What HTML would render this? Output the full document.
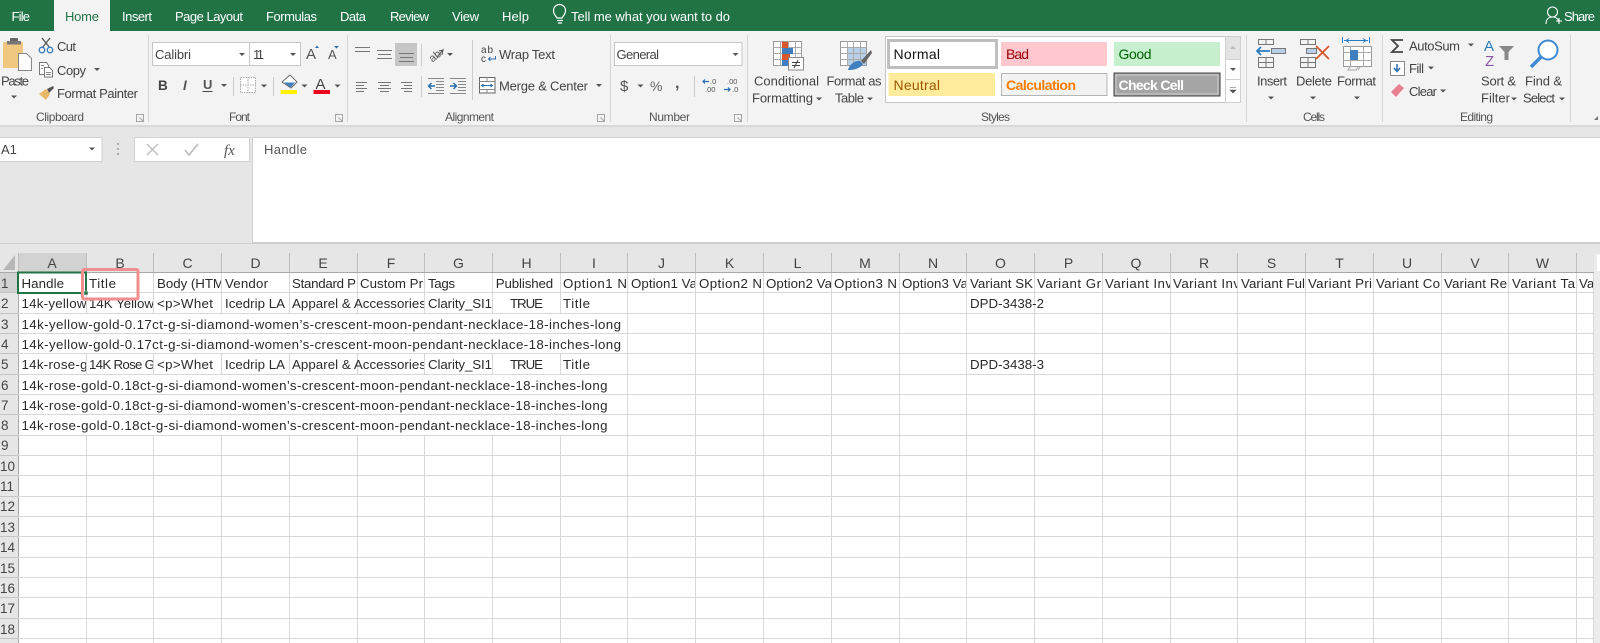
<!DOCTYPE html>
<html><head><meta charset="utf-8"><title>Excel</title>
<style>
html,body{margin:0;padding:0;width:1600px;height:643px;overflow:hidden;background:#fff}
svg.root{display:block;filter:blur(.3px)}
text{font-family:"Liberation Sans",sans-serif;font-size:13px;fill:#444}
.t{fill:#fff;font-size:13px}
.g{font-size:12px;fill:#555}
.c{font-size:13.3px;fill:#2a2a2a}
.h{font-size:14px;fill:#444;text-anchor:middle}
.r{font-size:13.5px;fill:#444}
.car{fill:#555}
</style></head><body>
<svg class="root" width="1600" height="643" viewBox="0 0 1600 643" xmlns="http://www.w3.org/2000/svg">
<defs><path id="cr" d="M-3 -1.500H3L0 1.500Z" class="car"/>
<path id="dl" d="M0 0H7V7H0ZM3 3L7 7M7 4V7H4" fill="none" stroke="#a5a5a5" stroke-width="1"/></defs>
<!-- backgrounds -->
<rect width="1600" height="643" fill="#fff"/>
<rect y="31" width="1600" height="94" fill="#f3f3f3"/>
<rect y="125" width="1600" height="2" fill="#d8d8d8"/>
<rect y="127" width="1600" height="146" fill="#e6e6e6"/>
<!-- title bar -->
<rect width="1600" height="31" fill="#217346"/>
<rect x="54" width="56" height="32" fill="#f3f3f3"/>
<text class="t" x="11.500" y="21" textLength="18.500">File</text>
<text x="65" y="21" textLength="34" style="fill:#217346">Home</text>
<text class="t" x="122" y="21" textLength="30">Insert</text>
<text class="t" x="175" y="21" textLength="68">Page Layout</text>
<text class="t" x="266" y="21" textLength="51">Formulas</text>
<text class="t" x="340" y="21" textLength="26">Data</text>
<text class="t" x="390" y="21" textLength="39">Review</text>
<text class="t" x="452" y="21" textLength="27">View</text>
<text class="t" x="502" y="21" textLength="27">Help</text>
<path d="M557 18c-1-2-3.500-3.500-3.500-7.500a6 6 0 0 1 12 0c0 4-2.500 5.500-3.500 7.500ZM557 20.500h6M558 23h4" fill="none" stroke="#fff" stroke-width="1.200"/>
<text class="t" x="571" y="21" textLength="159">Tell me what you want to do</text>
<path d="M1546 24c0-5 3-7 6.500-7s6.500 2 6.500 7M1552.500 17a5 5 0 1 0 0-10a5 5 0 0 0 0 10ZM1556 21h6M1559 18v6" fill="none" stroke="#fff" stroke-width="1.100"/>
<text class="t" x="1564" y="21" textLength="31">Share</text>
<!-- ribbon separators -->
<path d="M148.500 35V122M347.500 35V122M610.500 35V122M747.500 35V122M1246.500 35V122M1382.500 35V122M1570.500 35V122" stroke="#d6d6d6"/>
<!-- group labels -->
<text class="g" x="36" y="121" textLength="48">Clipboard</text>
<text class="g" x="229" y="121" textLength="21">Font</text>
<text class="g" x="445" y="121" textLength="49">Alignment</text>
<text class="g" x="649" y="121" textLength="41">Number</text>
<text class="g" x="981" y="121" textLength="29">Styles</text>
<text class="g" x="1303" y="121" textLength="22">Cells</text>
<text class="g" x="1460" y="121" textLength="33">Editing</text>
<use href="#dl" x="136.500" y="114.500"/><use href="#dl" x="335.500" y="114.500"/><use href="#dl" x="597.500" y="114.500"/><use href="#dl" x="734.500" y="114.500"/>
<path d="M1594 120l4-4v4Z" fill="#777"/>
<!-- clipboard -->
<rect x="3" y="42" width="20" height="26" fill="#efc77f"/>
<rect x="10" y="38" width="8" height="5" rx="1" fill="#666"/>
<rect x="7" y="41" width="14" height="3.500" fill="#777"/>
<path d="M18.500 53.500h8l5 5v12h-13Z" fill="#fff" stroke="#888"/>
<text x="1" y="85.500" textLength="28">Paste</text>
<use href="#cr" x="14" y="97"/>
<path d="M42 38l8 10M50 38l-8 10" stroke="#555" stroke-width="1.300"/>
<circle cx="42" cy="50" r="2.800" fill="none" stroke="#3f7fbf" stroke-width="1.300"/><circle cx="50" cy="50" r="2.800" fill="none" stroke="#3f7fbf" stroke-width="1.300"/>
<text x="57" y="51" textLength="19">Cut</text>
<path d="M39.500 62.500h7l2 3v9h-9Z" fill="#fff" stroke="#777"/><path d="M44.500 67.500h5l3 3v6.500h-8Z" fill="#fff" stroke="#777"/><path d="M46 72.500h5M46 74.500h5M41 65.500h3M41 68.500h2" stroke="#888"/>
<text x="57" y="75" textLength="29">Copy</text>
<use href="#cr" x="97" y="69.500"/>
<path d="M39 94l7-5 4 5-4 6Z" fill="#e8b866"/><path d="M47 89l6-3 1 2-5 5Z" fill="#555"/>
<text x="57" y="98" textLength="81">Format Painter</text>
<!-- font -->
<rect x="152.500" y="42.500" width="97" height="23" fill="#fff" stroke="#c6c6c6"/>
<rect x="249.500" y="42.500" width="51" height="23" fill="#fff" stroke="#c6c6c6"/>
<text x="155" y="59" textLength="36">Calibri</text>
<use href="#cr" x="242" y="54.500"/>
<text x="253" y="59" textLength="11">11</text>
<use href="#cr" x="293" y="54.500"/>
<text x="306" y="59" style="font-size:15px;fill:#555">A</text><path d="M315 48l2-2.500 2 2.500Z" fill="#2b6cb0"/>
<text x="328" y="59" style="font-size:13px;fill:#555">A</text><path d="M334 46h5l-2.500 2.500Z" fill="#2b6cb0"/>
<text x="158" y="90" style="font-size:13.500px;font-weight:bold;fill:#444">B</text>
<text x="183" y="90" style="font-size:13.500px;font-style:italic;font-weight:bold;fill:#555">I</text>
<text x="203" y="89" style="font-size:13px;font-weight:bold;fill:#555">U</text><path d="M202.500 91.500h10" stroke="#444"/>
<use href="#cr" x="224" y="85.500"/>
<path d="M240.500 77.500h15v15h-15ZM248 77v16M240 85h16" fill="#fff" stroke="#aaa" stroke-dasharray="1.500 1"/>
<use href="#cr" x="264" y="86"/>
<path d="M282 82l8-7 7 7-6 6Z" fill="#fff" stroke="#666"/><path d="M284 82.500h11l-4.500 5Z" fill="#3f7fbf"/>
<rect x="280.500" y="90" width="16.500" height="4" fill="#fff200"/>
<use href="#cr" x="304.500" y="86"/>
<text x="315.500" y="89" style="font-size:15px;fill:#444">A</text>
<rect x="313.500" y="90" width="16.500" height="4" fill="#e8001c"/>
<use href="#cr" x="337.500" y="86"/>
<path d="M233.500 77V96M273.500 77V96" stroke="#ccc"/>
<!-- alignment -->
<path d="M355 47.500h15M355 51.500h15" stroke="#777"/>
<path d="M377 50.500h15M378 54.500h13M377 58.500h15" stroke="#777"/>
<rect x="395" y="43" width="22" height="23" fill="#c6c6c6"/>
<path d="M399 53.500h15M400 57.500h13M399 61.500h15" stroke="#777"/>
<path d="M421.500 44V66M421.500 76V97M472.500 40V100" stroke="#ccc"/>
<text x="428" y="60" transform="rotate(-38 434 55)" style="font-size:11px;fill:#555">ab</text><path d="M437 57l6-7-1 5M443 50l-4 1" fill="none" stroke="#555"/>
<use href="#cr" x="450" y="54.500"/>
<text x="481" y="53" style="font-size:10px;fill:#444" textLength="12">ab</text><text x="481" y="62" style="font-size:10px;fill:#444">c</text>
<path d="M495.500 56v3h-7M490.500 57l-2 2 2 2" fill="none" stroke="#2b6cb0"/>
<text x="499" y="59" textLength="56">Wrap Text</text>
<path d="M356 82.500h11M356 85.500h8M356 88.500h11M356 91.500h8M378 82.500h13M380 85.500h9M378 88.500h13M380 91.500h9M401 82.500h11M404 85.500h8M401 88.500h11M404 91.500h8" stroke="#777"/>
<path d="M436 81.500h8M436 84.500h8M436 87.500h8M436 90.500h8M428 78.500h16M428 93.500h16M458 81.500h8M458 84.500h8M458 87.500h8M458 90.500h8M450 78.500h16M450 93.500h16" stroke="#888"/>
<path d="M435 86h-6M431.500 83l-3 3 3 3M450 86h6M453.500 83l3 3-3 3" fill="none" stroke="#2b6cb0" stroke-width="1.400"/>
<rect x="479.500" y="77.500" width="15.500" height="15.500" fill="#fff" stroke="#666"/>
<path d="M479 81.500h16M479 89.500h16M487 77v4M487 89v4" stroke="#888"/><path d="M482 85.500h10M483.500 84l-2 1.500 2 1.500M490.500 84l2 1.500-2 1.500" fill="none" stroke="#2b6cb0"/>
<text x="499" y="90.500" textLength="89">Merge &amp; Center</text>
<use href="#cr" x="599" y="85.500"/>
<!-- number -->
<rect x="614.500" y="42.500" width="127.500" height="23" fill="#fff" stroke="#c6c6c6"/>
<text x="616.500" y="59" textLength="42.500">General</text>
<use href="#cr" x="735.500" y="54.500"/>
<text x="620" y="91" style="font-size:15px;fill:#555">$</text><use href="#cr" x="640.500" y="86"/>
<text x="650" y="91" style="font-size:14px;fill:#666" textLength="14">%</text>
<text x="675" y="88" style="font-size:16px;font-weight:bold;fill:#555">,</text>
<path d="M694.500 76V97" stroke="#ccc"/>
<text x="710" y="84" style="font-size:7.500px;fill:#555">.0</text><text x="705" y="92" style="font-size:7.500px;fill:#555">.00</text><path d="M709 81.500h-6M705 79.500l-2 2 2 2" fill="none" stroke="#2b6cb0" stroke-width="1.200"/>
<text x="727" y="84" style="font-size:7.500px;fill:#555">.00</text><text x="732" y="92" style="font-size:7.500px;fill:#555">.0</text><path d="M724 89.500h6M728 87.500l2 2-2 2" fill="none" stroke="#2b6cb0" stroke-width="1.200"/>
<!-- conditional formatting -->
<rect x="773.500" y="41.500" width="28" height="24" fill="#fff" stroke="#999"/>
<path d="M773 47.500h29M773 53.500h29M773 59.500h29M780.500 41v25M788.500 41v25M795.500 41v25" stroke="#aaa"/>
<rect x="782" y="42" width="6" height="6" fill="#d9572b"/><rect x="782" y="48" width="11" height="6" fill="#3f7fbf"/><rect x="782" y="54" width="8" height="6" fill="#d9572b"/><rect x="782" y="60" width="6" height="6" fill="#3f7fbf"/>
<rect x="788.500" y="57.500" width="15" height="12.500" fill="#fff" stroke="#888"/>
<path d="M792 62.500h8M792 65.500h8M798 60l-4 8" stroke="#444"/>
<text x="754" y="85.500" textLength="65">Conditional</text>
<text x="752" y="102.500" textLength="61">Formatting</text>
<use href="#cr" x="819" y="99"/>
<!-- format as table -->
<rect x="840.500" y="41.500" width="26" height="24" fill="#fff" stroke="#999"/>
<rect x="848" y="48" width="18" height="17" fill="#b8cfe8"/>
<path d="M840 47.500h27M840 53.500h27M840 59.500h27M847.500 41v25M853.500 41v25M860.500 41v25" stroke="#aaa"/>
<path d="M871 50l-10 11 3 3 8-11Z" fill="#666"/><path d="M848 70c1-5 7-10 12-9l3 3c-2 3-6 6-15 6Z" fill="#3f7fbf"/>
<text x="826.500" y="85.500" textLength="55">Format as</text>
<text x="835" y="102.500" textLength="29">Table</text>
<use href="#cr" x="870" y="99"/>
<!-- styles gallery -->
<rect x="885.500" y="36.500" width="355" height="66" fill="#fff" stroke="#c6c6c6"/>
<rect x="888.500" y="40.500" width="108" height="27" fill="#fff" stroke="#bfbfbf" stroke-width="3"/>
<text x="893.500" y="59" textLength="46.500" style="font-size:14px;fill:#111">Normal</text>
<rect x="1001" y="42" width="106" height="24" fill="#ffc7ce"/>
<text x="1006" y="59" textLength="23" style="font-size:14px;fill:#9c0006">Bad</text>
<rect x="1114" y="42" width="106" height="24" fill="#c6efce"/>
<text x="1118.500" y="59" textLength="33" style="font-size:14px;fill:#006100">Good</text>
<rect x="888.500" y="73" width="106.500" height="23" fill="#ffeb9c"/>
<text x="893.500" y="90" textLength="46.500" style="font-size:14px;fill:#9c5700">Neutral</text>
<rect x="1001.500" y="73.500" width="105.500" height="22" fill="#f2f2f2" stroke="#b5b5b5"/>
<text x="1006" y="90" textLength="70" style="font-size:14px;font-weight:bold;fill:#fa7d00">Calculation</text>
<rect x="1114" y="73" width="106" height="23" fill="#a5a5a5" stroke="#3f3f3f"/>
<rect x="1116" y="75" width="102" height="19" fill="none" stroke="#d8d8d8" stroke-width=".8"/>
<text x="1118.500" y="90" textLength="65.500" style="font-size:14px;font-weight:bold;fill:#fff">Check Cell</text>
<rect x="1225.500" y="36.500" width="15" height="23" fill="#e3e3e3" stroke="#d0d0d0"/>
<rect x="1225.500" y="59.500" width="15" height="20" fill="#fff" stroke="#d0d0d0"/>
<rect x="1225.500" y="79.500" width="15" height="23" fill="#fff" stroke="#d0d0d0"/>
<path d="M1230 49h6l-3-3Z" fill="#bbb"/><path d="M1230 68h6l-3 3Z" fill="#555"/><path d="M1230 87.500h6M1230 90h6l-3 3Z" fill="#555" stroke="#555" stroke-width=".6"/>
<!-- cells -->
<g transform="translate(1256 39)" fill="none" stroke="#777">
<rect x="2.500" y=".5" width="15" height="5"/><path d="M10 .5v5"/>
<rect x="2.500" y="18.500" width="15" height="10"/><path d="M10 18v11M2 23.500h16"/>
<rect x="15.500" y="9.500" width="14" height="5" fill="#b8cfe8"/>
<path d="M14 12H1M5 8l-4 4 4 4" stroke="#2b7cc0" stroke-width="1.800"/></g>
<text x="1257" y="85.500" textLength="30">Insert</text><use href="#cr" x="1271" y="98"/>
<g transform="translate(1300 39)" fill="none" stroke="#777">
<rect x=".5" y=".5" width="15" height="5"/><path d="M8 .5v5"/>
<rect x=".5" y="18.500" width="15" height="10"/><path d="M8 18v11M0 23.500h16"/>
<rect x="6.500" y="9.500" width="10" height="5" fill="#b8cfe8"/>
<path d="M16 7l13 13M29 7L16 20" stroke="#d9572b" stroke-width="1.800"/></g>
<text x="1296" y="85.500" textLength="36">Delete</text><use href="#cr" x="1313" y="98"/>
<path d="M1344 40.500h24M1346 40.500l3-2M1346 40.500l3 2M1366 40.500l-3-2M1366 40.500l-3 2M1342.500 37v6M1369.500 37v6" fill="none" stroke="#2b7cc0"/>
<rect x="1343.500" y="46.500" width="28" height="20" fill="#fff" stroke="#999"/>
<path d="M1343 52.500h29M1343 60.500h29M1350.500 46v21M1363.500 46v21M1350 67l-2 3h8l2-3M1360 67l-2 3" fill="none" stroke="#aaa"/>
<rect x="1350" y="50" width="8" height="10" fill="#3f7fbf"/>
<text x="1337" y="85.500" textLength="39">Format</text><use href="#cr" x="1357" y="98"/>
<!-- editing -->
<path d="M1403 40h-11l6 6-6 6h11" fill="none" stroke="#444" stroke-width="1.800"/>
<text x="1409" y="50.500" textLength="51">AutoSum</text><use href="#cr" x="1471" y="45"/>
<rect x="1390.500" y="61.500" width="14" height="14" fill="#fff" stroke="#888"/>
<path d="M1397 64v7M1394 68l3 3.500 3-3.500" fill="none" stroke="#2b6cb0" stroke-width="1.500"/>
<text x="1409" y="73" textLength="15">Fill</text><use href="#cr" x="1431" y="68"/>
<path d="M1391 92l8-8 5 4-8 9Z" fill="#e87f93"/>
<text x="1409" y="96" textLength="28">Clear</text><use href="#cr" x="1443" y="91"/>
<text x="1484" y="51" style="font-size:15px;fill:#2b7cc0" textLength="11">A</text>
<text x="1485" y="66" style="font-size:15px;fill:#8a54a8" textLength="10">Z</text>
<path d="M1499 46h15l-5.500 6v8h-4v-8Z" fill="#888"/>
<text x="1481" y="85.500" textLength="35">Sort &amp;</text>
<text x="1481" y="102.500" textLength="29">Filter</text><use href="#cr" x="1514" y="99"/>
<circle cx="1548" cy="50" r="9.500" fill="#fff" stroke="#3f8ad0" stroke-width="2"/>
<path d="M1541 57l-10 10" stroke="#3f8ad0" stroke-width="3.500"/>
<text x="1525" y="85.500" textLength="37">Find &amp;</text>
<text x="1523" y="102.500" textLength="32">Select</text><use href="#cr" x="1562" y="99"/>
<!-- formula bar -->
<rect x="-1" y="137.500" width="103" height="24" fill="#fff" stroke="#d0d0d0"/>
<text x="1" y="154" style="fill:#444">A1</text>
<use href="#cr" x="92" y="149"/>
<path d="M118 143v2M118 148v2M118 153v2" stroke="#999" stroke-width="1.500"/>
<rect x="134.500" y="137.500" width="115" height="24" fill="#fff" stroke="#d0d0d0"/>
<path d="M147 144l11 11M158 144l-11 11" stroke="#c0c0c0" stroke-width="1.500"/>
<path d="M185 150l4 5 9-11" fill="none" stroke="#c0c0c0" stroke-width="1.800"/>
<text x="224" y="155" style="font-family:'Liberation Serif',serif;font-style:italic;font-size:15px;fill:#555">fx</text>
<rect x="252.500" y="137.500" width="1349" height="105" fill="#fff" stroke="#d0d0d0"/>
<text x="264" y="154" textLength="43" style="fill:#555">Handle</text>
<path d="M0 243.500H1600" stroke="#cfcfcf"/>
<!-- sheet -->
<rect x="18" y="273" width="1576" height="370" fill="#fff"/>
<rect x="1594" y="253" width="6" height="390" fill="#ececec"/>
<rect x="1597" y="255" width="3" height="16" fill="#fff"/>
<rect x="0" y="253" width="18" height="390" fill="#e6e6e6"/>
<path d="M15 255v15H3Z" fill="#b7b7b7"/>
<rect x="18" y="253" width="68" height="20" fill="#d2d2d2"/>
<rect x="0" y="273" width="18" height="20" fill="#d2d2d2"/>
<!-- header separators -->
<path d="M18.500 253V272M86.500 253V272M153.500 253V272M221.500 253V272M289.500 253V272M357.500 253V272M424.500 253V272M492.500 253V272M560.500 253V272M627.500 253V272M695.500 253V272M763.500 253V272M831.500 253V272M899.500 253V272M966.500 253V272M1034.500 253V272M1102.500 253V272M1170.500 253V272M1237.500 253V272M1305.500 253V272M1373.500 253V272M1441.500 253V272M1508.500 253V272M1576.500 253V272" stroke="#bdbdbd"/>
<path d="M0 272.500H1594" stroke="#a8a8a8"/>
<path d="M18.500 272V643" stroke="#a8a8a8"/>
<path d="M0 292.500H18M0 313.500H18M0 333.500H18M0 353.500H18M0 374.500H18M0 394.500H18M0 414.500H18M0 435.500H18M0 455.500H18M0 475.500H18M0 496.500H18M0 516.500H18M0 536.500H18M0 557.500H18M0 577.500H18M0 597.500H18M0 618.500H18M0 638.500H18" stroke="#c4c4c4"/>
<!-- grid -->
<path d="M18 292.500H1594M18 313.500H1594M18 333.500H1594M18 353.500H1594M18 374.500H1594M18 394.500H1594M18 414.500H1594M18 435.500H1594M18 455.500H1594M18 475.500H1594M18 496.500H1594M18 516.500H1594M18 536.500H1594M18 557.500H1594M18 577.500H1594M18 597.500H1594M18 618.500H1594M18 638.500H1594" stroke="#d8d8d8"/>
<path d="M86.500 273V313M86.500 354V374M86.500 435V643M153.500 273V313M153.500 354V374M153.500 435V643M221.500 273V313M221.500 354V374M221.500 435V643M289.500 273V313M289.500 354V374M289.500 435V643M357.500 273V313M357.500 354V374M357.500 435V643M424.500 273V313M424.500 354V374M424.500 435V643M492.500 273V313M492.500 354V374M492.500 435V643M560.500 273V313M560.500 354V374M560.500 435V643M627.500 273V643M695.500 273V643M763.500 273V643M831.500 273V643M899.500 273V643M966.500 273V643M1034.500 273V643M1102.500 273V643M1170.500 273V643M1237.500 273V643M1305.500 273V643M1373.500 273V643M1441.500 273V643M1508.500 273V643M1576.500 273V643M1593.500 273V643" stroke="#d8d8d8"/>
<!-- col headers -->
<text class="h" x="52" y="268">A</text><text class="h" x="120" y="268">B</text><text class="h" x="187.500" y="268">C</text><text class="h" x="255.500" y="268">D</text><text class="h" x="323" y="268">E</text><text class="h" x="391" y="268">F</text><text class="h" x="458.500" y="268">G</text><text class="h" x="526.500" y="268">H</text><text class="h" x="594" y="268">I</text><text class="h" x="661.500" y="268">J</text><text class="h" x="729.500" y="268">K</text><text class="h" x="797.500" y="268">L</text><text class="h" x="865" y="268">M</text><text class="h" x="933" y="268">N</text><text class="h" x="1000.500" y="268">O</text><text class="h" x="1068.500" y="268">P</text><text class="h" x="1136" y="268">Q</text><text class="h" x="1204" y="268">R</text><text class="h" x="1271.500" y="268">S</text><text class="h" x="1339.500" y="268">T</text><text class="h" x="1407" y="268">U</text><text class="h" x="1475" y="268">V</text><text class="h" x="1542.500" y="268">W</text>
<!-- row headers -->
<text class="r" x="1" y="288">1</text><text class="r" x="1" y="308">2</text><text class="r" x="1" y="329">3</text><text class="r" x="1" y="349">4</text><text class="r" x="1" y="369">5</text><text class="r" x="1" y="390">6</text><text class="r" x="1" y="410">7</text><text class="r" x="1" y="430">8</text><text class="r" x="1" y="450">9</text>
<text class="r" x="0" y="471">10</text><text class="r" x="0" y="491">11</text><text class="r" x="0" y="511">12</text><text class="r" x="0" y="532">13</text><text class="r" x="0" y="552">14</text><text class="r" x="0" y="573">15</text><text class="r" x="0" y="593">16</text><text class="r" x="0" y="613">17</text><text class="r" x="0" y="634">18</text>
<!-- row 1 -->
<text class="c" x="21.500" y="288" textLength="42.500">Handle</text>
<text class="c" x="89" y="288" textLength="27">Title</text>
<svg x="153" y="273" width="68" height="20"><text class="c" x="4" y="15" textLength="67">Body (HTM</text></svg>
<text class="c" x="225" y="288" textLength="43">Vendor</text>
<svg x="289" y="273" width="68" height="20"><text class="c" x="3" y="15" textLength="64">Standard P</text></svg>
<svg x="357" y="273" width="67" height="20"><text class="c" x="3" y="15" textLength="63">Custom Pr</text></svg>
<text class="c" x="428" y="288" textLength="27">Tags</text>
<text class="c" x="495.700" y="288" textLength="57.500">Published</text>
<svg x="560" y="273" width="67" height="20"><text class="c" x="3" y="15" textLength="64">Option1 N</text></svg>
<svg x="627" y="273" width="68" height="20"><text class="c" x="4" y="15" textLength="66">Option1 Va</text></svg>
<svg x="695" y="273" width="68" height="20"><text class="c" x="4" y="15" textLength="63">Option2 N</text></svg>
<svg x="763" y="273" width="68" height="20"><text class="c" x="3" y="15" textLength="66">Option2 Va</text></svg>
<svg x="831" y="273" width="68" height="20"><text class="c" x="3" y="15" textLength="63">Option3 N</text></svg>
<svg x="899" y="273" width="67" height="20"><text class="c" x="3" y="15" textLength="66">Option3 Va</text></svg>
<svg x="966" y="273" width="68" height="20"><text class="c" x="4" y="15" textLength="63">Variant SK</text></svg>
<svg x="1034" y="273" width="68" height="20"><text class="c" x="3" y="15" textLength="64">Variant Gr</text></svg>
<svg x="1102" y="273" width="68" height="20"><text class="c" x="3" y="15" textLength="67">Variant Inv</text></svg>
<svg x="1170" y="273" width="67" height="20"><text class="c" x="3" y="15" textLength="67">Variant Inv</text></svg>
<svg x="1237" y="273" width="68" height="20"><text class="c" x="4" y="15" textLength="64">Variant Ful</text></svg>
<svg x="1305" y="273" width="68" height="20"><text class="c" x="3" y="15" textLength="64">Variant Pri</text></svg>
<svg x="1373" y="273" width="68" height="20"><text class="c" x="3" y="15" textLength="64">Variant Co</text></svg>
<svg x="1441" y="273" width="67" height="20"><text class="c" x="3" y="15" textLength="63">Variant Re</text></svg>
<svg x="1508" y="273" width="68" height="20"><text class="c" x="4" y="15" textLength="63">Variant Ta</text></svg>
<svg x="1576" y="273" width="17" height="20"><text class="c" x="3" y="15">Variant</text></svg>
<!-- row 2 -->
<svg x="18" y="293" width="68" height="20"><text class="c" x="3.500" y="15" textLength="65">14k-yellow</text></svg>
<svg x="86" y="293" width="67" height="20"><text class="c" x="3" y="15" textLength="65">14K Yellow</text></svg>
<text class="c" x="157" y="308" textLength="56">&lt;p&gt;Whet</text>
<text class="c" x="225" y="308" textLength="60">Icedrip LA</text>
<svg x="289" y="293" width="135" height="20"><text class="c" x="3" y="15" textLength="134">Apparel &amp; Accessories</text></svg>
<text class="c" x="428" y="308" textLength="64">Clarity_SI1</text>
<text class="c" x="510" y="308" textLength="33">TRUE</text>
<text class="c" x="563" y="308" textLength="27">Title</text>
<text class="c" x="970" y="308" textLength="74">DPD-3438-2</text>
<!-- row 3,4 -->
<text class="c" x="21.500" y="329" textLength="599.500">14k-yellow-gold-0.17ct-g-si-diamond-women’s-crescent-moon-pendant-necklace-18-inches-long</text>
<text class="c" x="21.500" y="349" textLength="599.500">14k-yellow-gold-0.17ct-g-si-diamond-women’s-crescent-moon-pendant-necklace-18-inches-long</text>
<!-- row 5 -->
<svg x="18" y="354" width="68" height="20"><text class="c" x="3.500" y="15" textLength="66">14k-rose-g</text></svg>
<svg x="86" y="354" width="67" height="20"><text class="c" x="3" y="15" textLength="66">14K Rose G</text></svg>
<text class="c" x="157" y="369" textLength="56">&lt;p&gt;Whet</text>
<text class="c" x="225" y="369" textLength="60">Icedrip LA</text>
<svg x="289" y="354" width="135" height="20"><text class="c" x="3" y="15" textLength="134">Apparel &amp; Accessories</text></svg>
<text class="c" x="428" y="369" textLength="64">Clarity_SI1</text>
<text class="c" x="510" y="369" textLength="33">TRUE</text>
<text class="c" x="563" y="369" textLength="27">Title</text>
<text class="c" x="970" y="369" textLength="74">DPD-3438-3</text>
<!-- rows 6-8 -->
<text class="c" x="21.500" y="390" textLength="586">14k-rose-gold-0.18ct-g-si-diamond-women’s-crescent-moon-pendant-necklace-18-inches-long</text>
<text class="c" x="21.500" y="410" textLength="586">14k-rose-gold-0.18ct-g-si-diamond-women’s-crescent-moon-pendant-necklace-18-inches-long</text>
<text class="c" x="21.500" y="430" textLength="586">14k-rose-gold-0.18ct-g-si-diamond-women’s-crescent-moon-pendant-necklace-18-inches-long</text>
<!-- selection & annotation -->
<rect x="18" y="272.500" width="68" height="20.500" fill="none" stroke="#217346" stroke-width="2"/>
<rect x="82.500" y="269.500" width="55.500" height="29.500" rx="1.500" fill="none" stroke="#f28e8e" stroke-width="3"/>
<rect x="84" y="291" width="4" height="4" fill="#217346" stroke="#fff" stroke-width=".5"/>
</svg>
</body></html>
